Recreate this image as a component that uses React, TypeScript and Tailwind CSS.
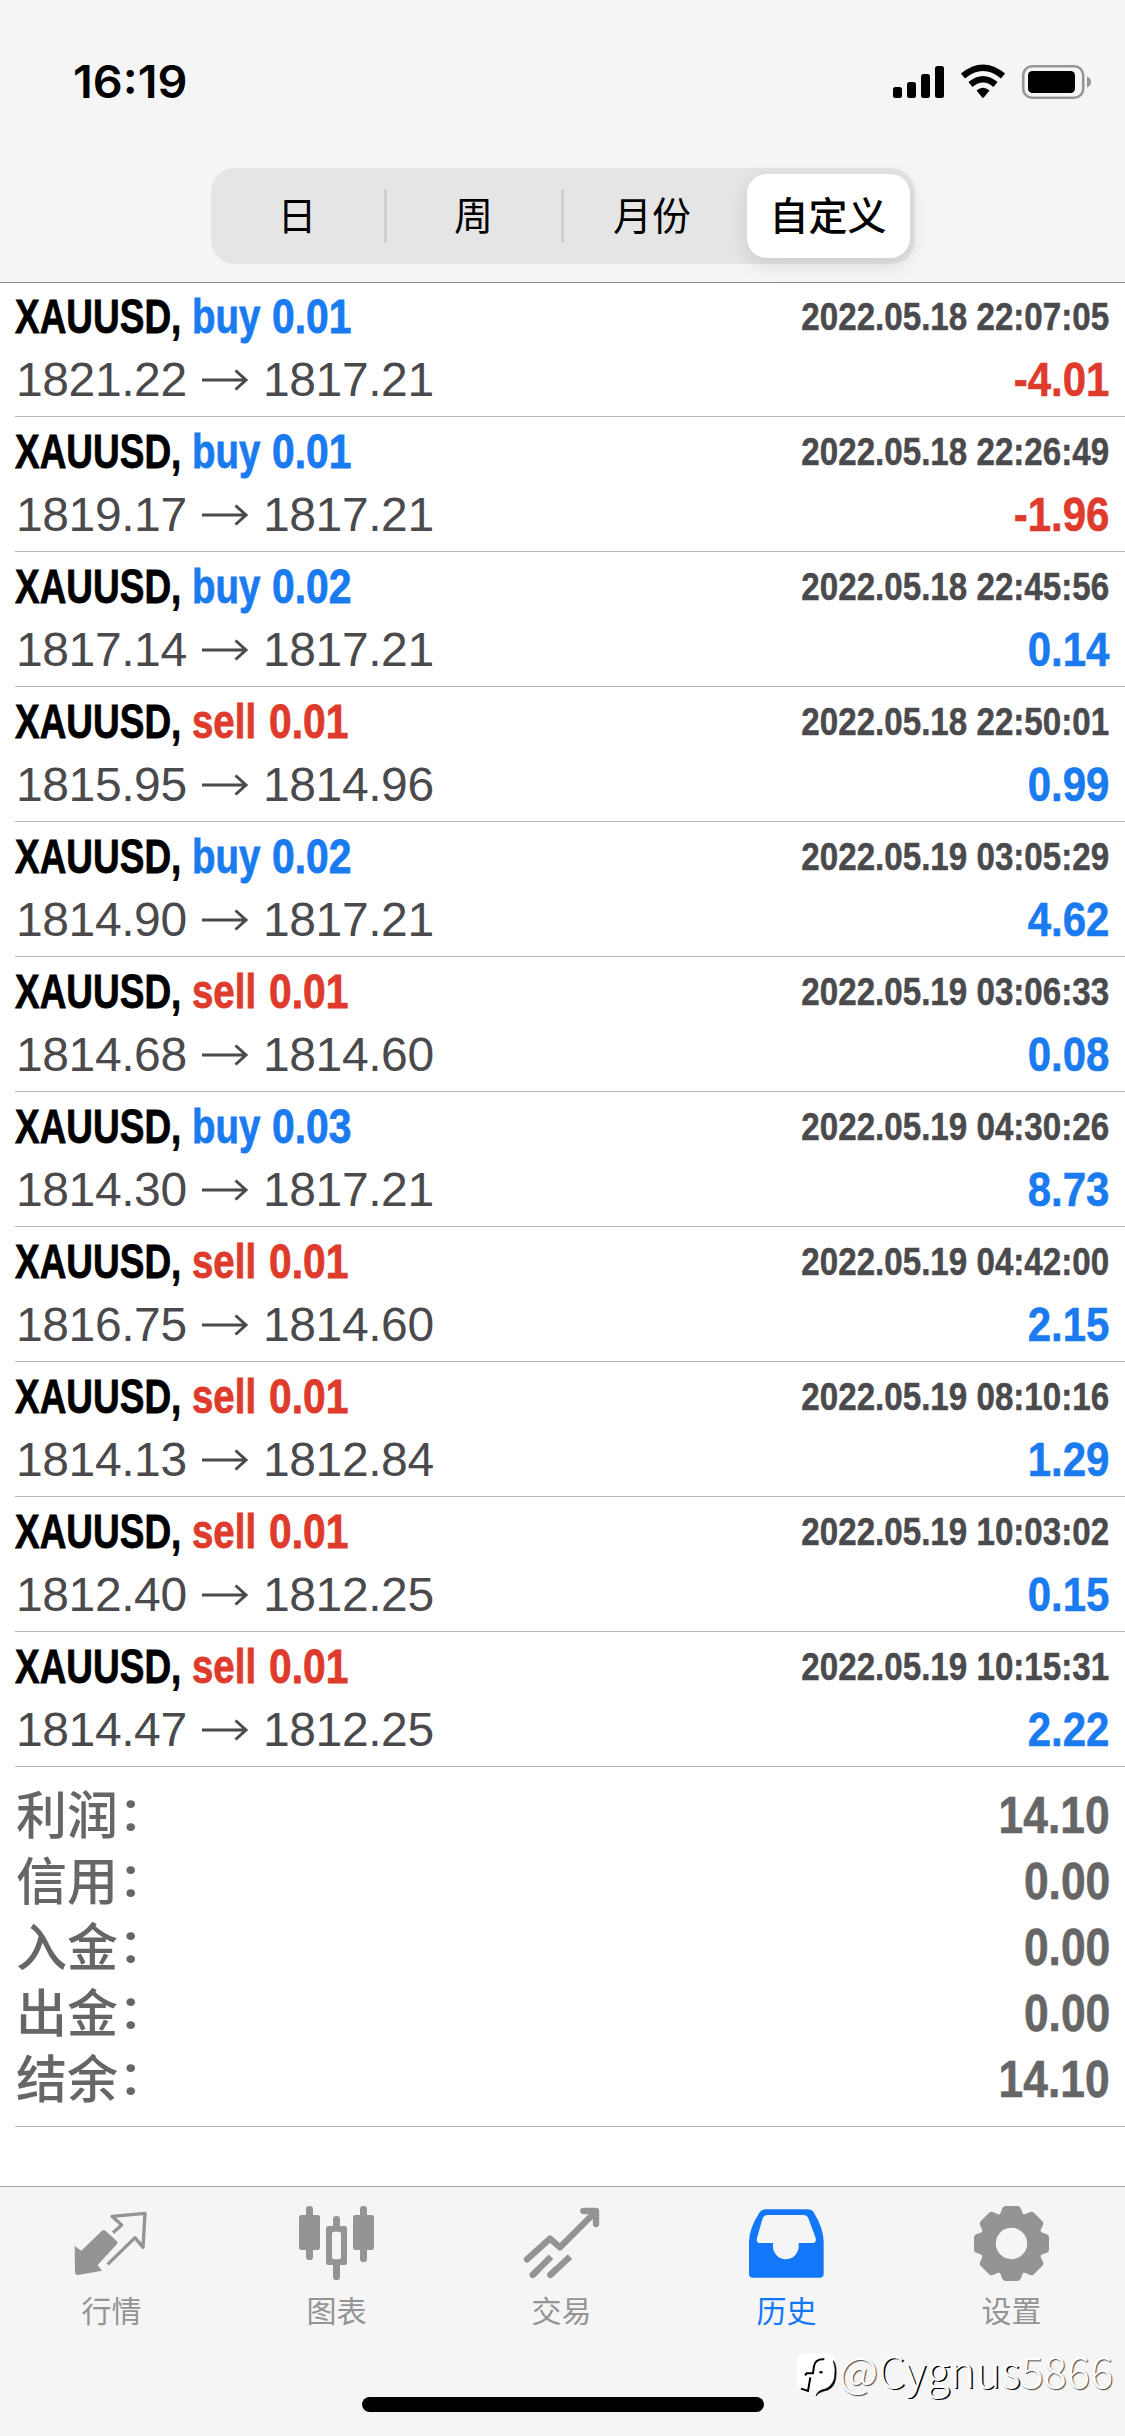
import clsx from "clsx";
import type { ReactNode } from "react";

type Deal = {
  side: "buy" | "sell";
  volume: string;
  open: string;
  close: string;
  time: string;
  profit: string;
};

const deals: Deal[] = [
  { side: "buy", volume: "0.01", open: "1821.22", close: "1817.21", time: "2022.05.18 22:07:05", profit: "-4.01" },
  { side: "buy", volume: "0.01", open: "1819.17", close: "1817.21", time: "2022.05.18 22:26:49", profit: "-1.96" },
  { side: "buy", volume: "0.02", open: "1817.14", close: "1817.21", time: "2022.05.18 22:45:56", profit: "0.14" },
  { side: "sell", volume: "0.01", open: "1815.95", close: "1814.96", time: "2022.05.18 22:50:01", profit: "0.99" },
  { side: "buy", volume: "0.02", open: "1814.90", close: "1817.21", time: "2022.05.19 03:05:29", profit: "4.62" },
  { side: "sell", volume: "0.01", open: "1814.68", close: "1814.60", time: "2022.05.19 03:06:33", profit: "0.08" },
  { side: "buy", volume: "0.03", open: "1814.30", close: "1817.21", time: "2022.05.19 04:30:26", profit: "8.73" },
  { side: "sell", volume: "0.01", open: "1816.75", close: "1814.60", time: "2022.05.19 04:42:00", profit: "2.15" },
  { side: "sell", volume: "0.01", open: "1814.13", close: "1812.84", time: "2022.05.19 08:10:16", profit: "1.29" },
  { side: "sell", volume: "0.01", open: "1812.40", close: "1812.25", time: "2022.05.19 10:03:02", profit: "0.15" },
  { side: "sell", volume: "0.01", open: "1814.47", close: "1812.25", time: "2022.05.19 10:15:31", profit: "2.22" },
];

const totals = [
  { label: "利润", value: "14.10" },
  { label: "信用", value: "0.00" },
  { label: "入金", value: "0.00" },
  { label: "出金", value: "0.00" },
  { label: "结余", value: "14.10" },
];

const StatusBar = () => (
  <div className="flex h-[168px] items-start justify-between pt-[52px] pr-[33px] pl-[73px]">
    <span className="origin-left scale-x-[1.04] font-['Inter'] text-[45px] leading-[60px] font-semibold text-black">
      16:19
    </span>
    <svg className="mt-[11px]" width="200" height="38" viewBox="0 0 200 38">
      <rect x="1" y="24" width="9" height="11" rx="2.5" />
      <rect x="15" y="19" width="9" height="16" rx="2.5" />
      <rect x="29" y="11" width="9" height="24" rx="2.5" />
      <rect x="43" y="3" width="9" height="32" rx="2.5" />
      <g fill="none" stroke="#000" strokeWidth="6.5">
        <path d="M71 13 Q91 -3.500 111 13" />
        <path d="M78.500 21.500 Q91 11 103.500 21.500" />
      </g>
      <path d="M84.500 27.500 Q91 22 97.500 27.500 L92 34.300 Q91 35.300 90 34.300Z" />
      <rect x="131.200" y="3.200" width="60" height="31.600" rx="9" fill="none" stroke="#969696" strokeWidth="2.600" />
      <rect x="136" y="8" width="47" height="22" rx="4.500" />
      <path d="M195 13.500 Q199 15 199 19 Q199 23 195 24.500Z" fill="#969696" />
    </svg>
  </div>
);

const Segments = () => (
  <div className="mx-auto flex h-24 w-[704px] items-center rounded-[24px] bg-[#e5e5e6] text-[39px] leading-none text-black">
    <div className="w-[173px] text-center">日</div>
    <div className="h-[54px] w-[3px] rounded-full bg-[#cfcfd1]" />
    <div className="w-[174px] text-center">周</div>
    <div className="h-[54px] w-[3px] rounded-full bg-[#cfcfd1]" />
    <div className="w-[177px] text-center">月份</div>
    <div className="ml-[6px] flex h-[84px] w-[163px] items-center justify-center rounded-[20px] bg-white font-medium shadow-[0_6px_20px_rgba(0,0,0,0.12)]">
      自定义
    </div>
  </div>
);

const Arrow = () => (
  <svg width="48" height="24" viewBox="0 0 48 24" fill="none" stroke="#4a4a4d" strokeWidth="3">
    <path d="M1 12 H45 M34.500 2.500 L45 12 L34.500 21.500" />
  </svg>
);

const DealRow = ({ deal }: { deal: Deal }) => {
  const isBuy = deal.side === "buy";
  return (
    <div className="ml-[15px] h-[135px] border-b border-[#b8b8bb] pt-px pr-4 whitespace-nowrap">
      <div className="flex h-[68px] items-center justify-between text-[48px] leading-[68px] font-bold">
        <div className="flex [-webkit-text-stroke:0.8px_currentColor]">
          <div className="w-[177px] text-black">
            <span className="inline-block origin-left scale-x-[0.77]">XAUUSD,</span>
          </div>
          <div className={clsx("flex", isBuy ? "text-[#1a7af0]" : "text-[#de3b2d]")}>
            <div className={isBuy ? "w-[80px]" : "w-[77px]"}>
              <span className="inline-block origin-left scale-x-[0.8]">{deal.side}</span>
            </div>
            <span className="inline-block origin-left scale-x-[0.85]">{deal.volume}</span>
          </div>
        </div>
        <span className="-mt-px origin-right scale-x-[0.85] text-[39px] text-[#4a4a4d] [-webkit-text-stroke:0.5px_currentColor]">
          {deal.time}
        </span>
      </div>
      <div className="flex h-[58px] items-center justify-between text-[48px] leading-[58px] text-[#4a4a4d]">
        <div className="flex items-center pl-px tracking-[-0.4px]">
          <span className="w-[185px]">{deal.open}</span>
          <Arrow />
          <span className="ml-[14px]">{deal.close}</span>
        </div>
        <span
          className={clsx(
            "origin-right scale-x-[0.875] font-bold [-webkit-text-stroke:0.6px_currentColor]",
            deal.profit.startsWith("-") ? "text-[#de3b2d]" : "text-[#1a7af0]"
          )}
        >
          {deal.profit}
        </span>
      </div>
    </div>
  );
};

const Totals = () => (
  <div className="ml-[15px] h-[360px] border-b border-[#b8b8bb] pt-4 pr-[15px]">
    {totals.map(({ label, value }) => (
      <div key={label} className="flex h-[66px] items-center justify-between text-[51px] leading-[66px] text-[#666]">
        <span className="pt-px pl-px font-medium">
          {label}
          <span className="inline-block -translate-y-[2px] scale-y-90">：</span>
        </span>
        <span className="origin-right scale-x-[0.87] font-bold [-webkit-text-stroke:0.6px_currentColor]">{value}</span>
      </div>
    ))}
  </div>
);

const QuotesIcon = () => (
  <>
    <path d="M2 120 L22 134 L83 75 Q89 70 95 75 L129 106 Q132 110 129 114 L71 177 L84 194 L12 207 Q3 207 3 198Z" />
    <path d="M117 80 L143 57 L114 31 L213 22 L207 124 L183 95 L101 175" fill="none" stroke="currentColor" strokeWidth="10" strokeLinejoin="round" />
  </>
);

const ChartIcon = () => (
  <>
    <rect x="21" y="0" width="21" height="162" rx="10" />
    <rect x="0" y="27" width="63" height="105" rx="7" />
    <rect x="102" y="30" width="21" height="192" rx="10" />
    <rect x="81" y="60" width="63" height="117" rx="7" />
    <rect x="99" y="77" width="27" height="83" rx="7" fill="#f5f5f5" />
    <rect x="183" y="0" width="21" height="168" rx="10" />
    <rect x="162" y="27" width="63" height="105" rx="7" />
  </>
);

const TradeIcon = () => (
  <g fill="none" stroke="currentColor" strokeWidth="19">
    <g strokeLinecap="round" strokeLinejoin="round">
      <path d="M9 160 L78 98 L108 124 L214 18" />
      <path d="M178 15 H216 V54" />
      <path d="M26 207 L41 192 M79 207 L94 192" />
    </g>
    <path d="M26 207 L81 152 M79 207 L138 152" />
  </g>
);

const HistoryIcon = () => (
  <path
    fillRule="evenodd"
    d="M50 10 H174 Q189 10 195 20 Q224 68 224 108 V203 Q224 215 212 215 H12 Q0 215 0 203 V108 Q0 68 31 20 Q38 10 50 10Z M56 27 Q46 27 41 37 L24 96 Q21 111 32 111 H72 V121 A38.500 38.500 0 0 0 149 121 V111 H191 Q203 111 200 96 L178 37 Q173 27 163 27Z"
  />
);

const SettingsIcon = () => (
  <>
    {[0, 45, 90, 135, 180, 225, 270, 315].map((angle) => (
      <path
        key={angle}
        d="M94 0 H131 Q138 0 141 8 L145 20 Q148 27 156 30 L112 112 L69 30 Q77 27 80 20 L84 8 Q87 0 94 0Z"
        transform={`rotate(${angle} 112.5 112.5)`}
      />
    ))}
    <circle cx="112.500" cy="112.500" r="47" fill="#f5f5f5" />
  </>
);

const TabItem = ({ label, active, children }: { label: string; active?: boolean; children: ReactNode }) => (
  <div className={clsx("flex w-[225px] flex-col items-center", active ? "text-[#1277f8]" : "text-[#949494]")}>
    <svg width="75" height="75" viewBox="0 0 225 225" fill="currentColor" className="overflow-visible">
      {children}
    </svg>
    <span className="mt-[16px] text-[30px] leading-[30px]">{label}</span>
  </div>
);

const Watermark = () => (
  <div className="absolute top-[2341px] left-[796px] flex items-center">
    <svg width="42" height="54" viewBox="0 0 126 162">
      <path
        d="M32 40 H88 Q118 40 118 70 V102 Q118 136 84 144 Q70 148 62 160 L60 152 L14 144 Q2 138 2 122 V70 Q2 40 32 40Z"
        fill="#fff"
        transform="translate(0 -6)"
      />
      <path
        d="M85 56 Q58 54 54 76 L51 98 H32 L27 104 M43 110 L36 151 L15 144 M70 95 H80"
        fill="none"
        stroke="#000"
        strokeWidth="6"
        transform="translate(0 -4)"
      />
      <path
        d="M112 56 Q121 80 115 110 Q108 134 86 142 Q64 145 60 162 Q66 151 84 147 Q114 142 119 110 Q124 72 112 56Z"
        stroke="#000"
        strokeWidth="2"
      />
    </svg>
    <span className="ml-px font-['Noto_Sans_CJK_SC'] text-[43px] leading-[56px] font-light tracking-[0.2px] text-white [text-shadow:1px_1px_1px_#444]">
      @<span className="[text-shadow:1.5px_1px_0_#000]">Cygnus</span>5866
    </span>
  </div>
);

export default function App() {
  return (
    <div className="relative flex h-[2436px] w-[1125px] flex-col overflow-hidden bg-white font-['Liberation_Sans','Noto_Sans_CJK_SC',sans-serif]">
      <header className="h-[283px] border-b border-[#8e8e90] bg-[#f5f5f5]">
        <StatusBar />
        <Segments />
      </header>
      <main className="-mt-px grow">
        {deals.map((deal) => (
          <DealRow key={deal.time} deal={deal} />
        ))}
        <Totals />
      </main>
      <footer className="flex h-[250px] flex-col items-center border-t border-[#a0a0a2] bg-[#f5f5f5]">
        <nav className="mr-[2px] flex h-[210px] pt-[19px]">
          <TabItem label="行情">
            <QuotesIcon />
          </TabItem>
          <TabItem label="图表">
            <ChartIcon />
          </TabItem>
          <TabItem label="交易">
            <TradeIcon />
          </TabItem>
          <TabItem label="历史" active>
            <HistoryIcon />
          </TabItem>
          <TabItem label="设置">
            <SettingsIcon />
          </TabItem>
        </nav>
        <div className="h-[15px] w-[402px] rounded-full bg-black" />
      </footer>
      <Watermark />
    </div>
  );
}
